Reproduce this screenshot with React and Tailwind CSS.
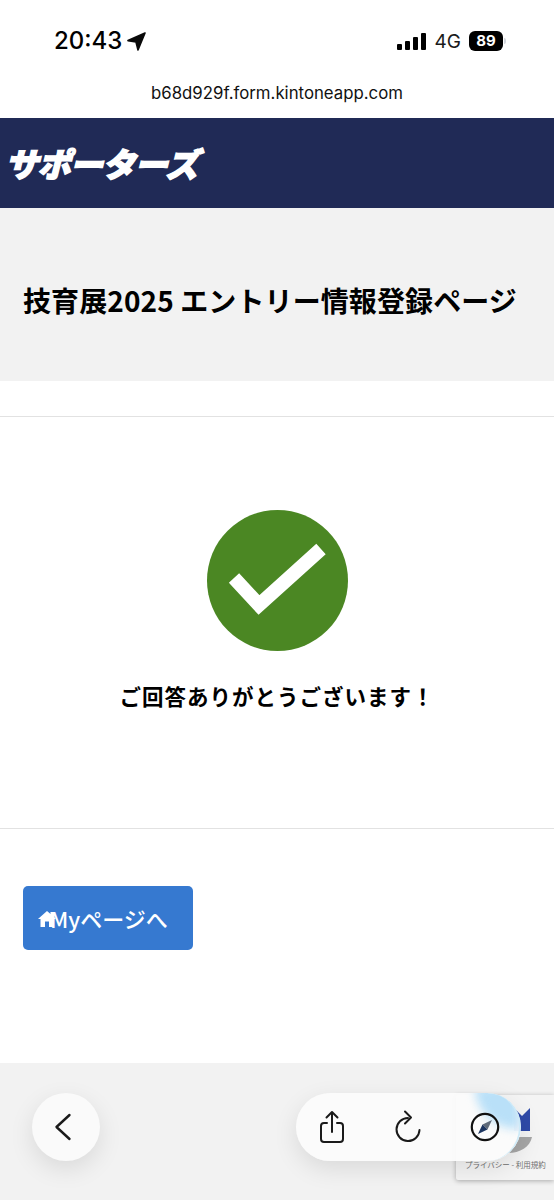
import { ChevronLeft } from 'lucide-react';

const cjk = 'font-["Noto_Sans_CJK_JP","Noto_Sans",sans-serif]';

const StatusBar = () => (
  <div className="h-[74px] flex items-start justify-between pt-[25px] pl-[54px] pr-[48px] text-black font-['Inter',sans-serif]">
    <div className="flex items-center gap-[5px]">
      <span className="text-[24px] leading-[32px] font-medium">20:43</span>
      {/* location arrow */}
      <svg width="19" height="19" viewBox="0 0 19 19">
        <path d="M18 1 L1 8.6 L9 10 L11 18 Z" fill="#0a0a0a" stroke="#0a0a0a" strokeWidth="1.6" strokeLinejoin="round" />
      </svg>
    </div>
    <div className="flex items-center gap-[8px] h-[32px]">
      <div className="flex items-end gap-[3px] mr-[1px]">
        <span className="w-[5px] h-[6px] rounded-[1px] bg-black" />
        <span className="w-[5px] h-[9px] rounded-[1px] bg-black" />
        <span className="w-[5px] h-[13px] rounded-[1px] bg-black" />
        <span className="w-[5px] h-[17px] rounded-[1px] bg-black" />
      </div>
      <span className="text-[19px] leading-none text-[#1a1a1a]">4G</span>
      <div className="flex items-center gap-[1px]">
        <span className="w-[34px] h-[20px] rounded-[6px] bg-black text-white text-[15px] font-bold leading-[20px] text-center">89</span>
        <span className="w-[2px] h-[6px] rounded-r-sm bg-gray-300" />
      </div>
    </div>
  </div>
);

const BottomBar = () => (
  <div className="relative h-[137px] bg-[#f2f2f2] flex items-start justify-between pt-[30px] pl-[32px] pr-[33px]">
    {/* reCAPTCHA badge sits behind the floating toolbar */}
    <div className="absolute left-[456px] top-[32px] w-[98px] h-[85px] bg-[#f4f4f4] rounded-l-[2px] shadow-[0_1px_5px_rgba(0,0,0,0.3)] overflow-hidden">
      <svg className="absolute left-[52px] top-[12px]" width="30" height="48" viewBox="0 0 30 48">
        <path d="M6 1 L14 9 L22 1 V24 H6 Z" fill="#2f4aa8" />
        <path d="M0 46 C12 46 22 40 24 30 L10 30 Z" fill="#a6a6a6" />
      </svg>
      <p className={`absolute left-[9px] top-[64px] whitespace-nowrap text-[7.5px] leading-[12px] text-[#6f6f6f] ${cjk}`}>
        プライバシー - 利用規約
      </p>
    </div>

    <button className="relative w-[68px] h-[68px] rounded-full bg-[#fafafa] flex items-center justify-center shadow-[0_8px_24px_rgba(0,0,0,0.1)]">
      <svg width="18" height="28" viewBox="0 0 18 28" fill="none" stroke="#1a1a1a" strokeWidth="2.4" strokeLinecap="round" strokeLinejoin="round" className="-ml-[6px]">
        <path d="M15.5 2 L2.5 14 L15.5 26" />
      </svg>
    </button>

    <div className="relative w-[225px] h-[68px] rounded-[34px] bg-[#fbfbfb]/95 flex items-center justify-between pl-[23px] pr-[21px] shadow-[0_8px_24px_rgba(0,0,0,0.1)] overflow-hidden">
      <span className="absolute right-[2px] -top-[6px] w-[44px] h-[42px] rounded-bl-full bg-[#b9e0f8] blur-[5px]" />
      <span className="absolute right-0 top-0 w-[68px] h-[68px] rounded-full border-r-2 border-[#cdeaf8]" />
      <svg className="relative" width="26" height="34" viewBox="0 0 26 34" fill="none" stroke="#1a1a1a" strokeWidth="2" strokeLinecap="round" strokeLinejoin="round">
        <path d="M8 13 H5 a3 3 0 0 0 -3 3 V29 a3 3 0 0 0 3 3 H21 a3 3 0 0 0 3 -3 V16 a3 3 0 0 0 -3 -3 H18" />
        <path d="M13 22 V2 M7.5 7.5 L13 2 L18.5 7.5" />
      </svg>
      {/* reload, open at the top right */}
      <svg className="relative" width="28" height="34" viewBox="0 0 28 34" fill="none" stroke="#1a1a1a" strokeWidth="2" strokeLinecap="round" strokeLinejoin="round">
        <path d="M14 8 A11.5 11.5 0 1 0 25.5 20" />
        <path d="M11 1.5 L17 7.5 L11 13.5" />
      </svg>
      <svg className="relative" width="30" height="30" viewBox="0 0 30 30">
        <circle cx="15" cy="15" r="13.2" fill="none" stroke="#111" strokeWidth="2.2" />
        <path d="M22 8 L17.5 17.5 L12.5 12.5 Z" fill="#5f6b7a" />
        <path d="M8 22 L12.5 12.5 L17.5 17.5 Z" fill="#1c3560" />
      </svg>
    </div>
  </div>
);

const App = () => {
  return (
    <div className={`w-[554px] h-[1200px] bg-white flex flex-col overflow-hidden ${cjk}`}>
      <StatusBar />
      <p className="h-[44px] text-center text-[16.8px] leading-[38px] text-[#111] font-['Inter',sans-serif]">
        b68d929f.form.kintoneapp.com
      </p>

      {/* Brand header */}
      <header className="h-[90px] bg-[#202a56] flex items-center pl-[5px]">
        <span className="text-[33px] leading-none font-black italic text-white tracking-[-0.6px] [-webkit-text-stroke:1.5px_white]">
          サポーターズ
        </span>
      </header>

      {/* Title */}
      <div className="h-[173px] bg-[#f2f2f2] flex items-center pl-[23px] pt-[10px]">
        <h1 className="text-[28px] leading-[40px] font-bold text-black whitespace-nowrap tracking-[0.1px]">
          技育展2025 エントリー情報登録ページ
        </h1>
      </div>

      {/* Completion message */}
      <section className="mt-[35px] h-[413px] border-y border-[#e2e2e2] flex flex-col items-center pt-[93px]">
        <svg width="141" height="141" viewBox="0 0 141 141">
          <circle cx="70.5" cy="70.5" r="70.5" fill="#4b8723" />
          <path d="M27 68 L52 95 L114 39" fill="none" stroke="#fff" strokeWidth="14" />
        </svg>
        <p className="mt-[29px] text-[21.5px] leading-[32px] font-bold tracking-[1px] text-black">
          ご回答ありがとうございます！
        </p>
      </section>

      {/* Action */}
      <div className="flex-1 pt-[57px] pl-[23px]">
        <button className="w-[170px] h-[64px] rounded-[5px] bg-[#3679d0] flex items-center pl-[15px] text-white text-[22px] font-medium">
          <svg width="18" height="18" viewBox="0 0 18 18" fill="#fff" className="shrink-0 mt-[1px] -mr-[6px]">
            <path d="M9 1 L12.5 4 V2 H15 V6.2 L18 9 H15.5 V17 H11 V11.5 H7 V17 H2.5 V9 H0 Z" />
          </svg>
          <span>Myページへ</span>
        </button>
      </div>

      <BottomBar />
    </div>
  );
};

export default App;
